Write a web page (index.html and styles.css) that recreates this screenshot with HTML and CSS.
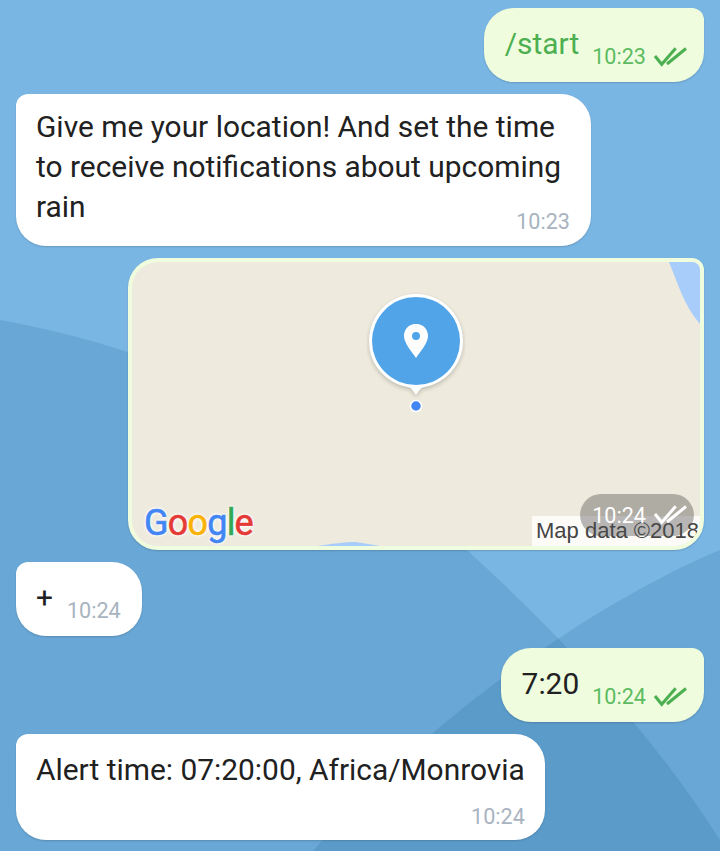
FILE: index.html
```html
<!DOCTYPE html>
<html lang="en">
<head>
<meta charset="utf-8">
<title>Chat</title>
<link rel="stylesheet" href="styles.css">
</head>
<body>
<svg class="wallpaper" viewBox="0 0 720 851" aria-hidden="true">
  <path class="wave" d="M0 320C170 350 340 430 467 550C560 635 650 730 720 840V851H0Z"/>
  <path class="wave" d="M720 550C600 600 430 715 313 851H720Z"/>
</svg>
<main class="chat">
  <div class="bubble out short">
    <span class="cmd">/start</span>
    <span class="meta">10:23
      <svg class="ticks" viewBox="0 0 34 20"><path d="M1 9l6.7 8.3L21.7 1.3M13 17L32 1.5"/></svg>
    </span>
  </div>
  <div class="bubble in long">
    <p class="text">Give me your location! And set the time to receive notifications about upcoming rain</p>
    <div class="meta-row overlap"><span class="meta">10:23</span></div>
  </div>
  <div class="map">
    <svg class="water" viewBox="0 0 576 292" aria-hidden="true">
      <path class="water-fill" d="M541 4L552 32Q560 52 572 66V4Z"/>
      <path class="water-fill" d="M189 288C205 286 215 284 228 284L252 288Z"/>
    </svg>
    <div class="pin">
      <svg class="pin-svg" viewBox="0 0 100 124">
        <path class="pin-shape" d="M50 2C24 2 3 23 3 49C3 74 22 92 42 95C46 96 47 99 50 103C53 99 54 96 58 95C78 92 97 74 97 49C97 23 76 2 50 2Z"/>
        <circle class="pin-disc" cx="50" cy="49" r="44"/>
        <path class="pin-mark" d="M50 32C41 32 38 39 38 44C38 51 46 60 50 66C54 60 62 51 62 44C62 39 59 32 50 32Z"/>
        <circle class="pin-hole" cx="50" cy="44" r="4"/>
        <circle class="dot" cx="50" cy="114" r="5.5"/>
      </svg>
    </div>
    <div class="google"><span class="g-b">G</span><span class="g-r">o</span><span class="g-y">o</span><span class="g-b">g</span><span class="g-g">l</span><span class="g-r">e</span></div>
    <div class="attribution">Map data ©2018</div>
    <div class="map-time">10:24
      <svg class="ticks" viewBox="0 0 34 20"><path d="M1 9l6.7 8.3L21.7 1.3M13 17L32 1.5"/></svg>
    </div>
  </div>
  <div class="bubble in short">
    <span class="plain">+</span>
    <span class="meta">10:24</span>
  </div>
  <div class="bubble out short">
    <span class="plain">7:20</span>
    <span class="meta">10:24
      <svg class="ticks" viewBox="0 0 34 20"><path d="M1 9l6.7 8.3L21.7 1.3M13 17L32 1.5"/></svg>
    </span>
  </div>
  <div class="bubble in long single">
    <p class="text">Alert time: 07:20:00, Africa/Monrovia</p>
    <div class="meta-row"><span class="meta">10:24</span></div>
  </div>
</main>
</body>
</html>
```
FILE: styles.css
```css
* { box-sizing: border-box; }
html, body { margin: 0; height: 851px; overflow: hidden; }
body {
  position: relative;
  background: #7ab6e4;
  font-family: Roboto, "Liberation Sans", sans-serif;
  color: #212121;
}
.wallpaper { position: absolute; inset: 0; width: 720px; height: 851px; }
.wave { fill: #0f5987; fill-opacity: .15; }
.chat {
  position: relative;
  display: flex;
  flex-direction: column;
  gap: 12px;
  padding: 8px 16px 0;
}
.bubble {
  border-radius: 30px;
  box-shadow: 0 1px 2px rgba(0, 0, 0, .16);
}
.bubble.in { align-self: flex-start; background: #fff; border-top-left-radius: 12px; }
.bubble.out { align-self: flex-end; background: #effdde; border-top-right-radius: 12px; }
.short {
  display: flex;
  height: 74px;
  padding: 0 16px 0 21px;
  gap: 13px;
}
.bubble.in.short { padding: 0 21px 0 20px; gap: 14px; }
.long { padding: 13px 21px 12px 20px; max-width: 575px; }
.long.single { padding: 16px 20px 11px 20px; }
.text { margin: 0; font-size: 29.9px; line-height: 40px; }
.cmd, .plain { font-size: 29.9px; line-height: 34px; padding-top: 19px; }
.cmd { color: #4caf50; }
.meta {
  display: flex;
  align-items: center;
  gap: 8px;
  font-size: 21.6px;
  line-height: 24px;
  color: #a8b3bf;
}
.short .meta { align-self: flex-start; padding-top: 37px; }
.out .meta { color: #5dbb62; }
.meta-row { display: flex; justify-content: flex-end; align-items: flex-end; height: 39px; }
.meta-row.overlap { margin-top: -32px; }
.ticks { width: 34px; height: 20px; fill: none; stroke: currentColor; stroke-width: 3; }
.out .ticks { color: #4caf50; }
.map {
  position: relative;
  align-self: flex-end;
  width: 576px;
  height: 292px;
  border: 4px solid #effdde;
  border-radius: 30px 12px 30px 30px;
  background: #eeeadd;
  overflow: hidden;
  box-shadow: 0 1px 2px rgba(0, 0, 0, .16);
}
.water { position: absolute; left: -4px; top: -4px; width: 576px; height: 292px; }
.water-fill { fill: #a9cdfb; }
.pin { position: absolute; left: 234px; top: 30px; width: 100px; }
.pin-svg { display: block; width: 100px; height: 124px; }
.pin-shape { fill: #fff; filter: drop-shadow(0 2px 2px rgba(0, 0, 0, .2)); }
.pin-disc { fill: #51a4e8; }
.pin-mark { fill: #fff; }
.pin-hole { fill: #51a4e8; }
.dot { fill: #4285f4; stroke: #fff; stroke-width: 1.5; }
.google {
  position: absolute;
  left: 12px;
  bottom: 0;
  font-family: Roboto, sans-serif;
  font-weight: 400;
  font-size: 36px;
  line-height: 46px;
  letter-spacing: -.8px;
  -webkit-text-stroke: .6px currentColor;
  text-shadow: 0 0 3px #fff, 0 0 3px #fff, 0 0 4px #fff;
}
.g-b { color: #4285f4; }
.g-r { color: #e53935; }
.g-y { color: #f9b208; }
.g-g { color: #34a853; }
.attribution {
  position: absolute;
  right: 0;
  bottom: 0;
  width: 168px;
  height: 30px;
  padding: 0 0 0 4px;
  background: rgba(255, 255, 255, .8);
  font-family: "Liberation Sans", sans-serif;
  font-size: 22px;
  line-height: 30px;
  white-space: nowrap;
  overflow: hidden;
  color: #444;
}
.map-time {
  position: absolute;
  right: 6px;
  bottom: 10px;
  display: flex;
  align-items: center;
  gap: 8px;
  height: 42px;
  padding: 0 6px 0 12px;
  border-radius: 21px;
  background: rgba(80, 80, 80, .4);
  color: #fff;
  font-size: 21.6px;
}
```
